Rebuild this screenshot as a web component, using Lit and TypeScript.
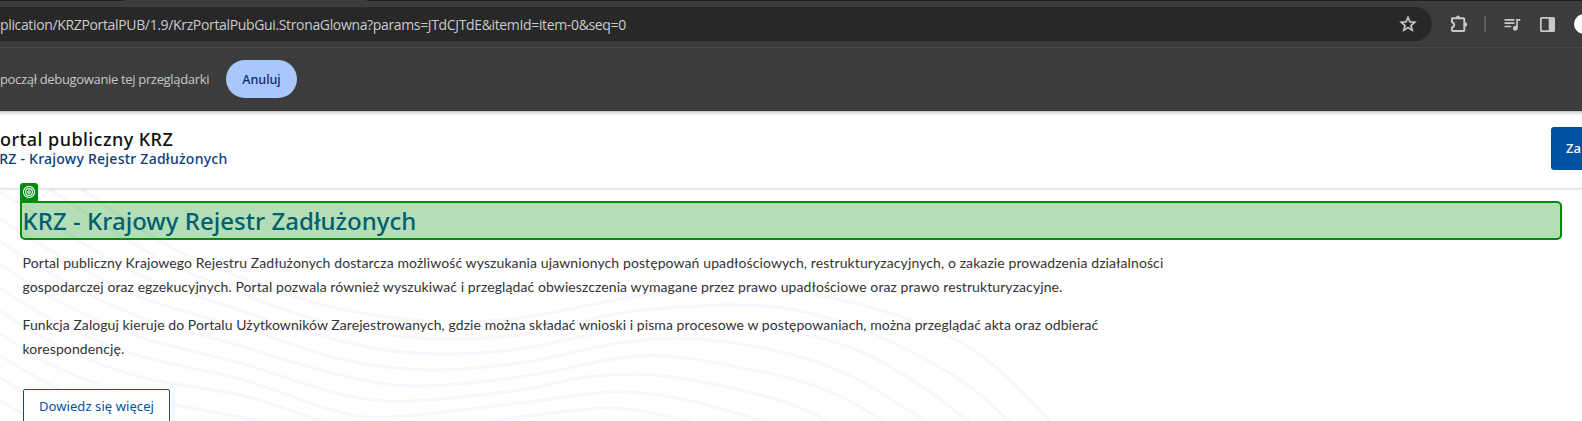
import { LitElement, html, svg, css } from "lit";
import { customElement } from "lit/decorators.js";

type Point = [number, number];

/* Contour lines of the page background, in page-section coordinates. */
const WAVES: Point[][] = [
  [[82, 0], [122, 28], [180, 63], [240, 88], [323, 116], [390, 128], [450, 133], [520, 129], [600, 114], [670, 102], [745, 98], [817, 106], [890, 124], [957, 151], [1007, 188], [1052, 234]],
  [[50, 0], [110, 40], [170, 75], [240, 104], [307, 128], [390, 146], [447, 150], [520, 146], [620, 124], [700, 117], [737, 116], [790, 120], [857, 138], [923, 169], [970, 198], [1012, 234]],
  [[0, 3], [60, 40], [140, 86], [240, 121], [290, 138], [373, 159], [440, 165], [520, 160], [637, 136], [700, 133], [790, 143], [857, 161], [923, 198], [970, 234]],
  [[0, 30], [60, 67], [140, 108], [240, 138], [340, 170], [427, 181], [520, 174], [620, 154], [697, 150], [790, 165], [857, 190], [928, 234]],
  [[0, 52], [60, 90], [140, 128], [240, 157], [340, 186], [417, 197], [520, 188], [620, 169], [677, 168], [753, 181], [790, 189], [840, 207], [887, 234]],
  [[0, 75], [60, 113], [140, 148], [240, 174], [340, 205], [410, 212], [520, 201], [587, 188], [653, 186], [727, 198], [790, 215], [832, 234]],
  [[0, 99], [60, 135], [140, 167], [240, 190], [333, 221], [390, 228], [520, 214], [587, 205], [627, 203], [687, 211], [770, 234]],
  [[0, 122], [60, 158], [140, 188], [240, 206], [323, 232], [380, 242], [450, 238], [520, 228], [603, 219], [647, 223], [693, 234]],
  [[0, 145], [60, 180], [140, 208], [260, 232], [290, 240]],
  [[0, 167], [60, 200], [140, 226], [190, 240]],
  [[0, 189], [50, 217], [100, 236]],
  [[0, 212], [44, 236]],
];

function smooth(points: Point[]): string {
  let d = `M${points[0][0]} ${points[0][1]}`;
  for (let i = 0; i < points.length - 1; i++) {
    const a = points[Math.max(i - 1, 0)];
    const b = points[i];
    const c = points[i + 1];
    const e = points[Math.min(i + 2, points.length - 1)];
    d += `C${b[0] + (c[0] - a[0]) / 6} ${b[1] + (c[1] - a[1]) / 6} ${c[0] - (e[0] - b[0]) / 6} ${c[1] - (e[1] - b[1]) / 6} ${c[0]} ${c[1]}`;
  }
  return d;
}

@customElement("browser-chrome")
class BrowserChrome extends LitElement {
  static styles = css`
    :host { display: block; height: 111px; background: #3c3c3c; font-family: "Open Sans", "Noto Sans", sans-serif; }
    .tabs { display: flex; height: 1px; justify-content: space-between; }
    .tab-rest { width: 123px; background: #1f1f1f; }
    .tab-rest.wide { width: 1215px; }
    .toolbar { display: flex; align-items: center; height: 46px; overflow: hidden; }
    .address { display: flex; align-items: center; justify-content: space-between; box-sizing: border-box; flex: none;
      width: 1432px; height: 34px; padding-right: 14px; background: #282828; border-radius: 0 17px 17px 0; }
    .url { font-size: 14px; letter-spacing: -0.35px; color: #c9cacb; white-space: nowrap; }
    svg { display: block; flex: none; fill: #c7c7c7; }
    .star { stroke: #c7c7c7; stroke-width: 0.5; }
    .puzzle { margin-left: 17px; fill: none; stroke: #c7c7c7; stroke-width: 2; stroke-linejoin: round; }
    .divider { flex: none; width: 2px; height: 16px; margin-left: 15px; background: #5e5e5e; }
    .queue { margin-left: 16px; }
    .panel { margin-left: 18px; }
    .avatar { flex: none; width: 20px; height: 20px; margin-left: 19px; border-radius: 50%; background: #fff; }
    .infobar { display: flex; align-items: center; box-sizing: border-box; height: 63px; border-top: 1px solid #484848; }
    .message { width: 226px; font-size: 13px; letter-spacing: -0.33px; color: #c7c7c7; white-space: nowrap; }
    .cancel { display: flex; align-items: center; justify-content: center; width: 71px; height: 38px; border-radius: 19px;
      background: #a8c7fa; color: #062e6f; font: 500 12.5px "Noto Sans", sans-serif; }
  `;
  render() {
    return html`
      <div class="tabs"><div class="tab-rest"></div><div class="tab-rest wide"></div></div>
      <div class="toolbar">
        <div class="address">
          <span class="url">plication/KRZPortalPUB/1.9/KrzPortalPubGui.StronaGlowna?params=JTdCJTdE&amp;itemId=item-0&amp;seq=0</span>
          <svg class="star" width="20" height="20" viewBox="0 0 24 24"><path d="M22 9.24l-7.19-.62L12 2 9.19 8.63 2 9.24l5.46 4.73L5.82 21 12 17.27 18.18 21l-1.63-7.03L22 9.24zM12 15.4l-3.76 2.27 1-4.28-3.32-2.88 4.38-.38L12 6.1l1.71 4.04 4.38.38-3.32 2.88 1 4.28L12 15.4z"/></svg>
        </div>
        <svg class="puzzle" width="20" height="20" viewBox="0 0 20 20">
          <path d="M3 4.2H14.6Q15.3 4.2 15.3 5V16.2Q15.3 17 14.6 17H4Q3 17 3 16.2V13.4C5.9 12.9 5.9 8.8 3 8.3V5Q3 4.2 4 4.2Z"/>
          <path fill="#c7c7c7" stroke="none" d="M7 4a2 2.4 0 0 1 4 0zM16 8.2a2.2 2.2 0 0 1 0 4.4z"/>
        </svg>
        <div class="divider"></div>
        <svg class="queue" width="20" height="20" viewBox="0 0 24 24"><path d="M15 6H3v2h12V6zm0 4H3v2h12v-2zM3 16h8v-2H3v2zM17 6v8.18c-.31-.11-.65-.18-1-.18-1.66 0-3 1.34-3 3s1.34 3 3 3 3-1.34 3-3V8h3V6h-5z"/></svg>
        <svg class="panel" width="15" height="15" viewBox="0 0 15 15"><path fill-rule="evenodd" d="M1.5 0h12A1.5 1.5 0 0 1 15 1.5v12a1.5 1.5 0 0 1-1.5 1.5h-12A1.5 1.5 0 0 1 0 13.5v-12A1.5 1.5 0 0 1 1.5 0zM1.7 1.7v11.6h7V1.7z"/></svg>
        <div class="avatar"></div>
      </div>
      <div class="infobar">
        <span class="message">począł debugowanie tej przeglądarki</span>
        <div class="cancel">Anuluj</div>
      </div>
    `;
  }
}

@customElement("portal-header")
class PortalHeader extends LitElement {
  static styles = css`
    :host { display: flex; justify-content: space-between; box-sizing: border-box; height: 78px; padding-top: 16px;
      background: linear-gradient(#c0c0c0, #e6e6e6 2px, #fff 5px); border-bottom: 1px solid #e2e2e2;
      box-shadow: 0 1px 2px rgba(0, 0, 0, 0.09); font-family: "Noto Sans", sans-serif; }
    .titles { display: flex; flex-direction: column; align-items: flex-end; width: 227.5px; padding-top: 2px; white-space: nowrap; }
    .name { width: 100%; font-size: 18px; font-weight: 500; line-height: 21px; letter-spacing: 0.45px; color: #111; }
    .sub { font-size: 14px; font-weight: 500; line-height: 18px; letter-spacing: 0.25px; color: #0c3c7e; }
    .login { box-sizing: border-box; width: 31px; height: 43px; padding-left: 15px; border-radius: 3px 0 0 3px;
      background: #0052a5; color: #fff; font-size: 13px; font-weight: 500; line-height: 43px; overflow: hidden; }
  `;
  render() {
    return html`
      <div class="titles">
        <div class="name">ortal publiczny KRZ</div>
        <div class="sub">RZ - Krajowy Rejestr Zadłużonych</div>
      </div>
      <div class="login">Za</div>
    `;
  }
}

@customElement("app-root")
class AppRoot extends LitElement {
  static styles = css`
    :host { display: block; width: 1582px; height: 421px; overflow: hidden; background: #fff; }
    portal-header { position: relative; }
    .page { display: grid; height: 232px; }
    .waves { grid-area: 1 / 1; display: block; fill: none; stroke: #f7f7fd; stroke-width: 3; }
    .content { grid-area: 1 / 1; position: relative; padding: 12px 20px 0; }
    .heading { position: relative; box-sizing: border-box; height: 39px; padding: 3px 0 0 2.5px; margin: 0;
      font: 500 24px/33px "Noto Sans", sans-serif; letter-spacing: 0.03px; color: #004b9c; white-space: nowrap; }
    .mark { position: absolute; inset: 0; box-sizing: border-box; border: 2px solid #008a0e; border-radius: 0 5px 5px 5px;
      background: rgba(0, 142, 8, 0.295); }
    .badge { position: absolute; left: 0; top: -18px; width: 18px; height: 19px; border-radius: 3px 3px 0 0; background: #008a0e; }
    .badge svg { display: block; fill: none; stroke: #fff; stroke-width: 1.1; }
    .text { margin: 11px 0 0 2.5px; font: 14px/24px Lato, sans-serif; color: #333; white-space: nowrap; }
    .text + .text { margin-top: 14px; }
    .line { display: block; letter-spacing: 0.102px; }
    .line.snug { letter-spacing: 0.087px; }
    .line.tight { letter-spacing: 0.075px; }
    .more { display: flex; align-items: center; justify-content: center; box-sizing: border-box; width: 147px; height: 35px;
      margin: 28px 0 0 3px; padding-bottom: 2px; border: 1px solid #0052a5; border-radius: 2px; background: #fff; color: #0052a5;
      font: 400 13px "Noto Sans", sans-serif; letter-spacing: 0.08px; }
  `;
  render() {
    return html`
      <browser-chrome></browser-chrome>
      <portal-header></portal-header>
      <div class="page">
        <svg class="waves" width="1582" height="232" viewBox="0 0 1582 232">
          ${WAVES.map((w) => svg`<path d=${smooth(w)}></path>`)}
        </svg>
        <div class="content">
          <h1 class="heading">KRZ - Krajowy Rejestr Zadłużonych
            <div class="mark"></div>
            <div class="badge">
              <svg width="18" height="18" viewBox="0 0 18 18"><circle cx="9" cy="9" r="5.6"/><circle cx="9" cy="9" r="3.4"/><circle cx="9" cy="9" r="1.3"/></svg>
            </div>
          </h1>
          <p class="text">
            <span class="line">Portal publiczny Krajowego Rejestru Zadłużonych dostarcza możliwość wyszukania ujawnionych postępowań upadłościowych, restrukturyzacyjnych, o zakazie prowadzenia działalności</span>
            <span class="line snug">gospodarczej oraz egzekucyjnych. Portal pozwala również wyszukiwać i przeglądać obwieszczenia wymagane przez prawo upadłościowe oraz prawo restrukturyzacyjne.</span>
          </p>
          <p class="text">
            <span class="line tight">Funkcja Zaloguj kieruje do Portalu Użytkowników Zarejestrowanych, gdzie można składać wnioski i pisma procesowe w postępowaniach, można przeglądać akta oraz odbierać</span>
            <span class="line">korespondencję.</span>
          </p>
          <div class="more">Dowiedz się więcej</div>
        </div>
      </div>
    `;
  }
}
